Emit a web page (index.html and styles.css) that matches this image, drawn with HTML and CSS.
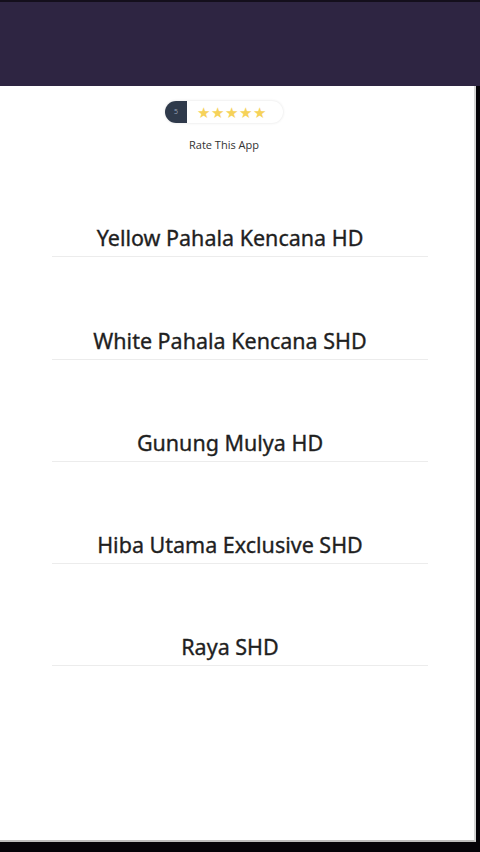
FILE: index.html
```html
<!DOCTYPE html>
<html lang="en">
<head>
    <meta charset="UTF-8">
    <meta name="viewport" content="width=device-width, initial-scale=1.0">
    <title>Tiket Bus</title>
    <link rel="stylesheet" href="styles.css">
</head>
<body>

    <header class="topbar"></header>

    <div class="page">
        <div class="rate">
            <div class="rate-badge">
                <span class="rate-num">5</span>
                <span class="rate-stars">&#9733;&#9733;&#9733;&#9733;&#9733;</span>
            </div>
            <p class="rate-label">Rate This App</p>
        </div>

        <div class="bus-list">
            <div class="bus-item"><span>Yellow Pahala Kencana HD</span></div>
            <div class="bus-item"><span>White Pahala Kencana SHD</span></div>
            <div class="bus-item"><span>Gunung Mulya HD</span></div>
            <div class="bus-item"><span>Hiba Utama Exclusive SHD</span></div>
            <div class="bus-item"><span>Raya SHD</span></div>
        </div>
    </div>

</body>
</html>
```

FILE: styles.css
```css
html, body {
    margin: 0;
    padding: 0;
    height: 852px;
    overflow: hidden;
}

body {
    font-family: "Open Sans", "Noto Sans", Arial, sans-serif;
    background: #050308;
    color: #222;
}

.topbar {
    height: 84px;
    background: #2e2542;
    border-top: 2px solid #140f1c;
}

.page {
    width: 476px;
    height: 756px;
    background: white;
    border-right: 2px solid #d4d4d4;
    border-bottom: 2px solid #bdbdbd;
    padding-top: 15px;
    box-sizing: border-box;
}

.rate {
    display: flex;
    flex-direction: column;
    align-items: center;
    padding-right: 26px;
}

.rate-badge {
    display: flex;
    align-items: center;
    height: 22px;
    border-radius: 11px;
    background: white;
    box-shadow: 0 0 3px rgba(0, 0, 0, 0.12);
}

.rate-num {
    width: 22px;
    height: 22px;
    border-radius: 11px 0 0 11px;
    background: #2f3a4b;
    color: #9aa4b5;
    font-size: 7px;
    line-height: 22px;
    text-align: center;
}

.rate-stars {
    color: #f6d25a;
    font-size: 15px;
    letter-spacing: 1px;
    padding: 0 16px 0 10px;
    line-height: 22px;
}

.rate-label {
    margin: 15px 0 0;
    font-size: 11px;
    line-height: 14px;
    color: #333;
}

.bus-list {
    margin: 3px 46px 0 52px;
}

.bus-item {
    height: 102.3px;
    display: flex;
    align-items: flex-end;
    justify-content: center;
    padding-right: 20px;
    padding-bottom: 4px;
    box-sizing: border-box;
    border-bottom: 1px solid #ececec;
    font-family: "Noto Sans", "Open Sans", Arial, sans-serif;
    font-size: 21.5px;
    line-height: 28px;
    color: #1f1f1f;
    -webkit-text-stroke: 0.35px #1f1f1f;
}
```
